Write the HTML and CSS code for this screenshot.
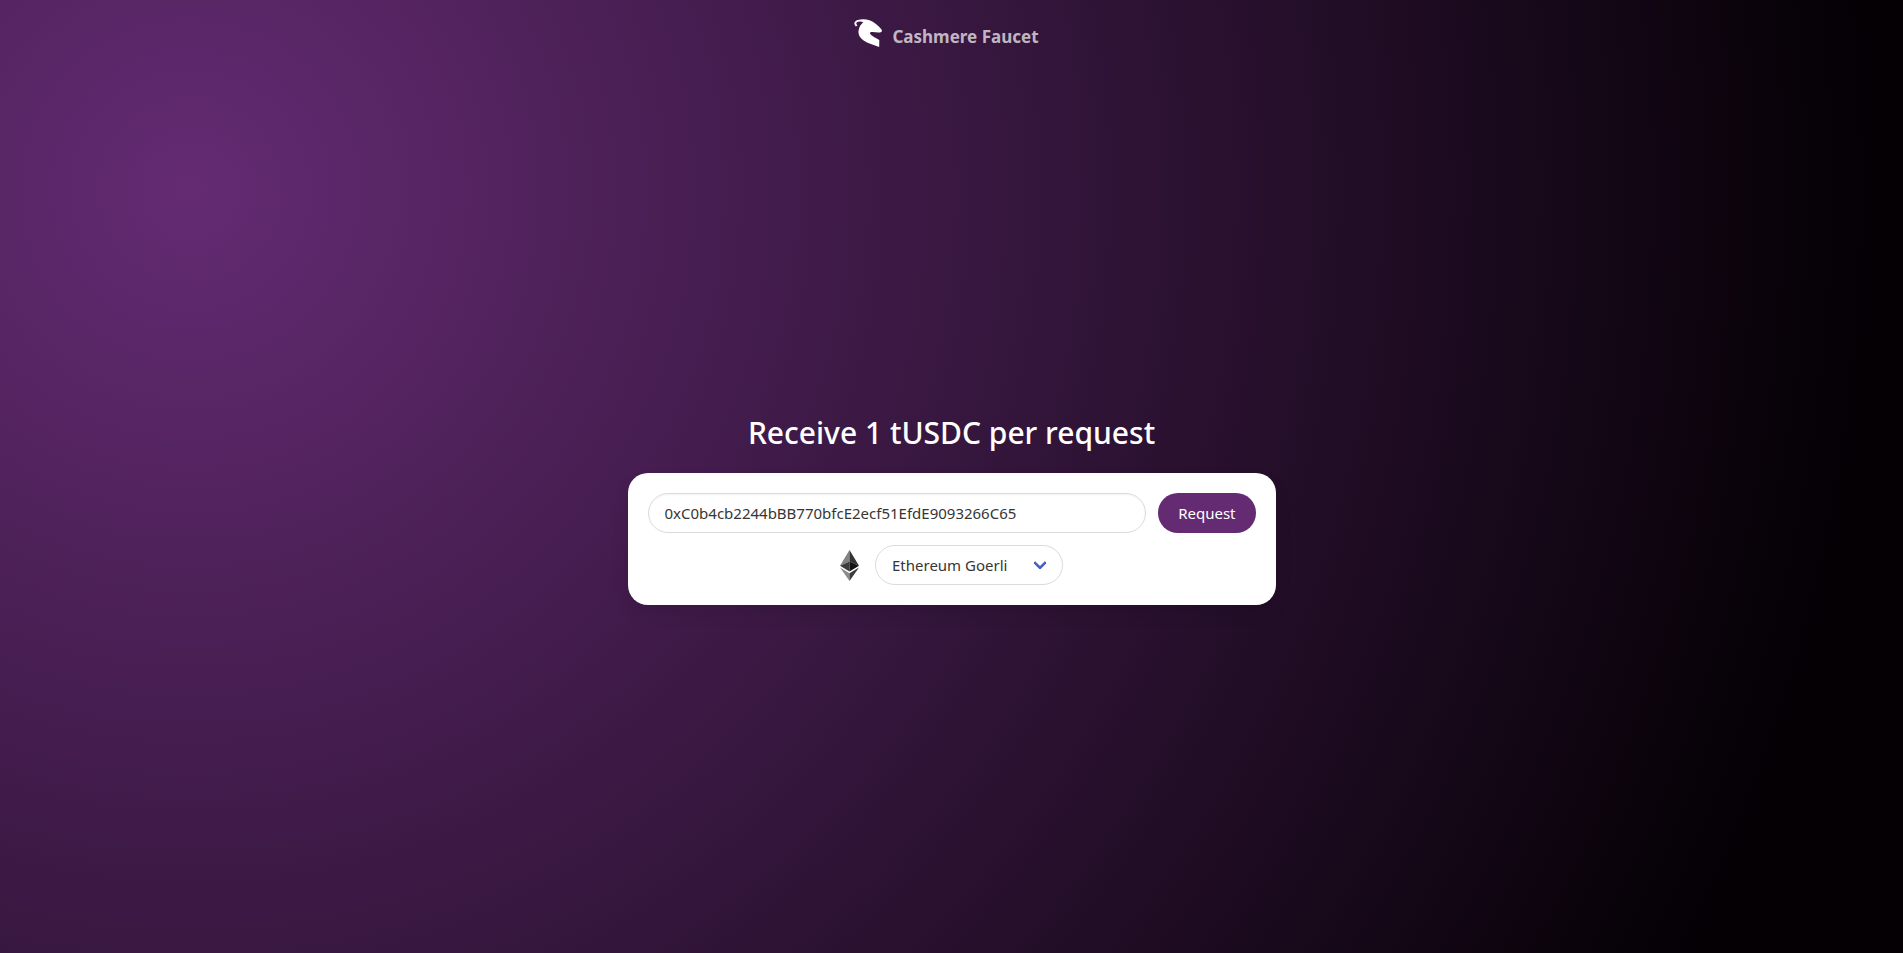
FILE: index.html
```html
<!DOCTYPE html>
<html lang="en">
<head>
	<meta charset="utf-8">
	<meta name="viewport" content="width=device-width, initial-scale=1">
	<title>Cashmere Faucet</title>
	<link rel="stylesheet" href="styles.css">
</head>
<body>
	<header class="navbar">
		<a class="brand" href="#">
			<svg class="logo" width="28" height="28" viewBox="0 0 28 28" aria-hidden="true">
				<path fill="#fff" d="M1.800 7.500C-.8 4.500.2 2 3.800.9 7.500-.2 12 0 15.500 1.200 20 2.600 24.300 6.500 27.300 10.300c1.200 1.600.4 3.200-1.300 3.200-2.800.2-5.500-.2-7.500-.5-1.600-.2-2.500.3-2.500 1.300 0 1.600 4.800 4.200 9.300 6.800l-.1 6.900c-5.500-2.300-11.500-3.600-15.600-6.600-4.200-2.900-5.700-6.400-5-10.200.6-3.300 2.100-6 4.700-8C7.500 2.200 4.400 2.100 2.900 3.200 1.800 4.200 2.400 5.500 3.500 6.400z"/>
			</svg>
			<span>Cashmere Faucet</span>
		</a>
	</header>
	<main class="faucet">
		<h1 class="title">Receive 1 tUSDC per request</h1>
		<form class="box">
			<div class="row">
				<input class="input" type="text" aria-label="Wallet address" value="0xC0b4cb2244bBB770bfcE2ecf51EfdE9093266C65">
				<button class="button" type="button">Request</button>
			</div>
			<div class="row network">
				<svg width="19" height="31" viewBox="0 0 19 31" aria-hidden="true">
					<path fill="#828384" d="M9.500 0 0 15.800l9.500-4.300z"/>
					<path fill="#343434" d="M9.500 0 19 15.800l-9.500-4.300z"/>
					<path fill="#3c3c3b" d="M9.500 11.500 0 15.800l9.500 5.600z"/>
					<path fill="#141414" d="M9.500 11.500 19 15.800l-9.500 5.600z"/>
					<path fill="#8c8c8c" d="M0 17.600 9.500 31v-7.800z"/>
					<path fill="#3c3c3b" d="M19 17.600 9.500 31v-7.800z"/>
				</svg>
				<div class="select">
					<select aria-label="Network">
						<option>Ethereum Goerli</option>
					</select>
				</div>
			</div>
		</form>
	</main>
</body>
</html>
```

FILE: styles.css
```css
* {
	box-sizing: border-box;
}

body {
	margin: 0;
	min-height: 100vh;
	display: flex;
	flex-direction: column;
	font-family: "Noto Sans", "Open Sans", sans-serif;
	font-size: 15px;
	line-height: 24px;
	color: #363636;
	background: radial-gradient(circle at 10% 20%, rgb(100, 43, 115) 0%, rgb(4, 0, 4) 90%) no-repeat;
}

.navbar {
	display: flex;
	justify-content: center;
	padding: 19px 10px 0 0;
}

.brand {
	display: flex;
	align-items: flex-start;
	gap: 10px;
	color: rgba(255, 255, 255, 0.7);
	font-size: 17px;
	font-weight: 700;
	text-decoration: none;
}

.brand span {
	padding-top: 6px;
}

.faucet {
	flex: 1;
	display: flex;
	flex-direction: column;
	align-items: center;
	justify-content: center;
	padding: 18px 12px 0;
}

.title {
	margin: 0 0 22px;
	font-size: 30px;
	line-height: 36px;
	font-weight: 500;
	text-align: center;
	color: #fff;
}

.box {
	width: 100%;
	max-width: 648px;
	padding: 20px;
	display: flex;
	flex-direction: column;
	gap: 12px;
	background: #fff;
	border-radius: 20px;
	box-shadow: 0 8px 16px rgba(10, 10, 10, 0.1);
}

.row {
	display: flex;
	align-items: center;
	gap: 12px;
}

.network {
	justify-content: center;
	gap: 16px;
}

.input,
.select select {
	height: 40px;
	padding: 0 16px;
	font: inherit;
	color: #363636;
	background: #fff;
	border: 1px solid #dbdbdb;
	border-radius: 20px;
}

.input {
	flex: 1;
	min-width: 0;
	box-shadow: inset 0 1px 2px rgba(10, 10, 10, 0.05);
}

.button {
	height: 40px;
	padding: 0 20px;
	font: inherit;
	color: #fff;
	background: rgb(100, 43, 115);
	border: none;
	border-radius: 20px;
	cursor: pointer;
}

.select {
	position: relative;
}

.select select {
	width: 188px;
	appearance: none;
	cursor: pointer;
}

/* dropdown arrow */
.select::after {
	content: "";
	position: absolute;
	box-sizing: border-box;
	top: 50%;
	right: 18px;
	width: 10px;
	height: 10px;
	margin-top: -7px;
	border: 3px solid #485fc7;
	border-top: 0;
	border-right: 0;
	border-radius: 2px;
	transform: rotate(-45deg);
	pointer-events: none;
}
```
